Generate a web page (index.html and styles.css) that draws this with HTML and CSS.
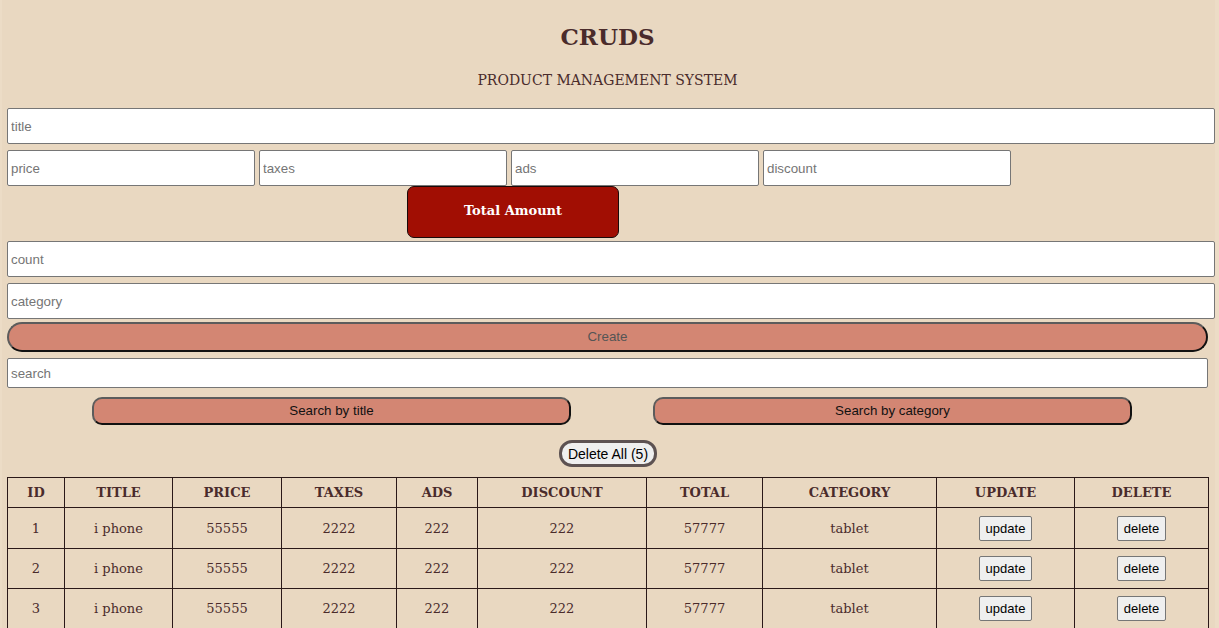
FILE: index.html
```html
<!DOCTYPE html>
<html>
<head>
<meta charset="utf-8">
<link rel="stylesheet" href="styles.css">
</head>
<body>
<div class="page">
  <header class="head">
    <h1 class="title">CRUDS</h1>
    <p class="subtitle">PRODUCT MANAGEMENT SYSTEM</p>
  </header>
  <div class="form">
    <input class="field wide" type="text" placeholder="title">
    <div class="price-row">
      <input class="field small" type="text" placeholder="price">
      <input class="field small" type="text" placeholder="taxes">
      <input class="field small" type="text" placeholder="ads">
      <input class="field small" type="text" placeholder="discount">
    </div>
    <div class="total-row"><div class="total">Total Amount</div></div>
    <input class="field wide gap-top" type="text" placeholder="count">
    <input class="field wide" type="text" placeholder="category">
    <button class="create">Create</button>
    <input class="field search" type="text" placeholder="search">
    <div class="search-btns">
      <button class="sbtn">Search by title</button>
      <button class="sbtn">Search by category</button>
    </div>
    <div class="del-row"><button class="delall">Delete All (5)</button></div>
  </div>
  <table class="tbl">
    <thead>
      <tr>
        <th class="c1">ID</th><th class="c2">TITLE</th><th class="c3">PRICE</th><th class="c4">TAXES</th><th class="c5">ADS</th><th class="c6">DISCOUNT</th><th class="c7">TOTAL</th><th class="c8">CATEGORY</th><th class="c9">UPDATE</th><th class="c10">DELETE</th>
      </tr>
    </thead>
    <tbody>
      <tr class="r1"><td>1</td><td>i phone</td><td>55555</td><td>2222</td><td>222</td><td>222</td><td>57777</td><td>tablet</td><td><button class="rowbtn">update</button></td><td><button class="rowbtn">delete</button></td></tr>
      <tr><td>2</td><td>i phone</td><td>55555</td><td>2222</td><td>222</td><td>222</td><td>57777</td><td>tablet</td><td><button class="rowbtn">update</button></td><td><button class="rowbtn">delete</button></td></tr>
      <tr><td>3</td><td>i phone</td><td>55555</td><td>2222</td><td>222</td><td>222</td><td>57777</td><td>tablet</td><td><button class="rowbtn">update</button></td><td><button class="rowbtn">delete</button></td></tr>
    </tbody>
  </table>
</div>
</body>
</html>
```

FILE: styles.css
```css
html {
  margin: 0;
  padding: 0;
  background: #ecdcc6;
  overflow: hidden;
}
body {
  margin: 0 4px 0 2px;
  padding: 0;
  min-height: 628px;
  background: #e9d8c1;
  font-family: "DejaVu Serif", "Liberation Serif", serif;
  color: #4a2b2b;
}
.page {
  width: 1201px;
  padding-left: 5px;
}
.head {
  text-align: center;
  height: 108px;
  overflow: hidden;
}
.title {
  margin: 0;
  padding-top: 22px;
  font-size: 23px;
  line-height: 30px;
  font-weight: bold;
}
.subtitle {
  margin: 18px 0 0 0;
  font-size: 14px;
  line-height: 20px;
}
.form {
  display: flex;
  flex-direction: column;
}
.field {
  box-sizing: border-box;
  background: #fff;
  border: 1px solid #767676;
  border-radius: 2px;
  font-family: "Liberation Sans", Arial, sans-serif;
  font-size: 13.33px;
  padding: 0 3px;
  color: #333;
  outline: none;
}
.field::placeholder { color: #757575; }
.wide {
  width: 1208px;
  height: 36px;
  margin-bottom: 6px;
}
.gap-top { margin-top: 3px; }
.price-row {
  display: flex;
  gap: 4px;
}
.small {
  width: 248px;
  height: 36px;
}
.total-row {
  display: flex;
  padding-left: 400px;
}
.total {
  box-sizing: border-box;
  width: 212px;
  height: 52px;
  padding-bottom: 4px;
  background: #a10e03;
  border: 1px solid #1a0a0a;
  border-radius: 7px;
  color: #fff;
  font-weight: bold;
  font-size: 13px;
  display: flex;
  align-items: center;
  justify-content: center;
}
.create {
  box-sizing: border-box;
  width: 1201px;
  height: 30px;
  margin-top: -3px;
  padding-bottom: 2px;
  background: #d38673;
  border-style: solid;
  border-width: 2px;
  border-color: #5c5c5c #111 #111 #5c5c5c;
  border-radius: 15px;
  color: #555;
  font-family: "Liberation Sans", Arial, sans-serif;
  font-size: 13.33px;
}
.search {
  width: 1201px;
  height: 30px;
  margin-top: 6px;
}
.search-btns {
  display: flex;
  padding-left: 85px;
  gap: 82px;
  margin-top: 9px;
}
.sbtn {
  box-sizing: border-box;
  width: 479px;
  height: 28px;
  padding-bottom: 2px;
  background: #d38673;
  border-style: solid;
  border-width: 2px;
  border-color: #5c5c5c #111 #111 #5c5c5c;
  border-radius: 10px;
  color: #111;
  font-family: "Liberation Sans", Arial, sans-serif;
  font-size: 13.33px;
}
.del-row {
  display: flex;
  justify-content: center;
  margin-top: 15px;
  padding-left: 1px;
}
.delall {
  box-sizing: border-box;
  width: 98px;
  height: 27px;
  background: #efefef;
  border: 3px solid #5d5252;
  border-radius: 13px;
  color: #000;
  font-family: "Liberation Sans", Arial, sans-serif;
  font-size: 14px;
  padding: 0;
}
.tbl {
  margin-top: 10px;
  width: 1202px;
  border-collapse: collapse;
  table-layout: fixed;
}
.tbl th, .tbl td {
  border: 1px solid #2a1818;
  text-align: center;
  padding: 0;
}
.tbl th {
  height: 29px;
  font-size: 13px;
  font-weight: bold;
}
.tbl td {
  height: 39px;
  font-size: 13px;
}
.tbl .r1 td { height: 40px; }
.c1 { width: 56px; }
.c2 { width: 107px; }
.c3 { width: 108px; }
.c4 { width: 114px; }
.c5 { width: 80px; }
.c6 { width: 168px; }
.c7 { width: 115px; }
.c8 { width: 173px; }
.c9 { width: 137px; }
.c10 { width: 133px; }
.rowbtn {
  box-sizing: border-box;
  height: 25px;
  background: #efefef;
  border: 1px solid #767676;
  border-radius: 2px;
  font-family: "Liberation Sans", Arial, sans-serif;
  font-size: 13px;
  color: #000;
  padding: 0 6px;
}
```
